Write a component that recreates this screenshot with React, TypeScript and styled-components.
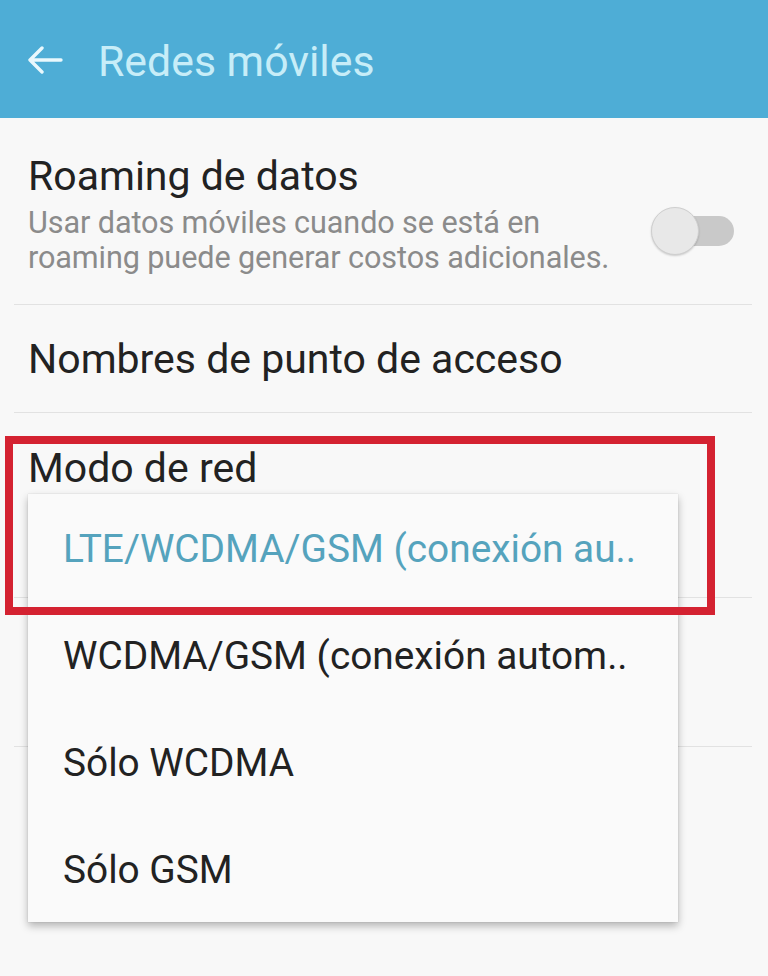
import React from "react";
import styled, { createGlobalStyle } from "styled-components";

const Global = createGlobalStyle`
  html, body { margin: 0; padding: 0; background: #f8f8f8; }
  body { font-family: Roboto, "Noto Sans", "Liberation Sans", sans-serif; }
  #root { width: 768px; height: 976px; overflow: hidden; background: #f8f8f8; }
`;

const Screen = styled.div`
  width: 768px;
  height: 976px;
  display: flex;
  flex-direction: column;
  background: #f8f8f8;
`;

const AppBar = styled.header`
  height: 118px;
  flex: none;
  background: #4eadd6;
  display: flex;
  align-items: center;
  padding-left: 27px;
  gap: 35px;
  box-sizing: border-box;
`;

const BackButton = styled.div`
  width: 36px;
  height: 28px;
  display: flex;
  align-items: center;
  justify-content: center;
  margin-top: 2px;
`;

const Title = styled.h1`
  margin: 3px 0 0 0;
  font-size: 42.8px;
  font-weight: 400;
  color: #c7edf8;
  line-height: 44px;
`;

const List = styled.div`
  position: relative;
  flex: 1;
`;

const Row = styled.div<{ $h: number; $pt?: number }>`
  height: ${(p) => p.$h}px;
  box-sizing: border-box;
  padding: ${(p) => p.$pt ?? 0}px 34px 0 28px;
  display: flex;
  align-items: ${(p) => (p.$pt === undefined ? "center" : "flex-start")};
  justify-content: space-between;
`;

const TextCol = styled.div`
  display: flex;
  flex-direction: column;
`;

const ItemTitle = styled.div`
  font-size: 41px;
  line-height: 44px;
  color: #222222;
`;

const ItemSub = styled.div`
  margin-top: 7px;
  font-size: 30.6px;
  line-height: 35px;
  color: #8b8b8b;
  letter-spacing: -0.1px;
`;

const Divider = styled.div`
  height: 1px;
  margin: 0 16px 0 14px;
  background: #e2e2e2;
`;

const Toggle = styled.div`
  position: relative;
  width: 83px;
  height: 48px;
  flex: none;
  align-self: center;
  margin-top: 4px;
`;

const Track = styled.div`
  position: absolute;
  right: 0;
  top: 9px;
  width: 60px;
  height: 30px;
  border-radius: 15px;
  background: #c9c9c9;
`;

const Thumb = styled.div`
  position: absolute;
  left: 0;
  top: 0;
  width: 46px;
  height: 46px;
  border-radius: 50%;
  background: #e8e8e8;
  border: 1px solid #cfcfcf;
  box-shadow: 0 1px 2px rgba(0, 0, 0, 0.18);
`;

const Menu = styled.div`
  position: absolute;
  left: 28px;
  top: 376px;
  width: 650px;
  background: #fafafa;
  box-shadow: 0 4px 8px rgba(0, 0, 0, 0.28), 0 0 1px rgba(0, 0, 0, 0.2);
  display: flex;
  flex-direction: column;
`;

const MenuItem = styled.div<{ $active?: boolean }>`
  height: 107px;
  box-sizing: border-box;
  padding: 3px 0 0 35px;
  display: flex;
  align-items: center;
  font-size: 38.8px;
  line-height: 42px;
  color: ${(p) => (p.$active ? "#55a3bd" : "#222222")};
  white-space: nowrap;
`;

const Highlight = styled.div`
  position: absolute;
  left: 5px;
  top: 318px;
  width: 710px;
  height: 179px;
  box-sizing: border-box;
  border: 8px solid #d42231;
  pointer-events: none;
`;

const BackArrow = () => (
  <svg width="36" height="28" viewBox="0 0 36 28" fill="none">
    <path
      d="M34 14H3M15 2L3 14l12 12"
      stroke="#e9f8fd"
      strokeWidth="3.4"
      strokeLinecap="round"
      strokeLinejoin="round"
    />
  </svg>
);

export default function App() {
  return (
    <>
      <Global />
      <Screen>
        <AppBar>
          <BackButton>
            <BackArrow />
          </BackButton>
          <Title>Redes móviles</Title>
        </AppBar>
        <List>
          <Row $h={186} $pt={36}>
            <TextCol>
              <ItemTitle>Roaming de datos</ItemTitle>
              <ItemSub>
                Usar datos móviles cuando se está en
                <br />
                roaming puede generar costos adicionales.
              </ItemSub>
            </TextCol>
            <Toggle>
              <Track />
              <Thumb />
            </Toggle>
          </Row>
          <Divider />
          <Row $h={107}>
            <ItemTitle>Nombres de punto de acceso</ItemTitle>
          </Row>
          <Divider />
          <Row $h={184} $pt={33}>
            <ItemTitle>Modo de red</ItemTitle>
          </Row>
          <Divider />
          <Row $h={148} />
          <Divider />
          <Menu>
            <MenuItem $active>LTE/WCDMA/GSM (conexión au..</MenuItem>
            <MenuItem>WCDMA/GSM (conexión autom..</MenuItem>
            <MenuItem>Sólo WCDMA</MenuItem>
            <MenuItem>Sólo GSM</MenuItem>
          </Menu>
          <Highlight />
        </List>
      </Screen>
    </>
  );
}
